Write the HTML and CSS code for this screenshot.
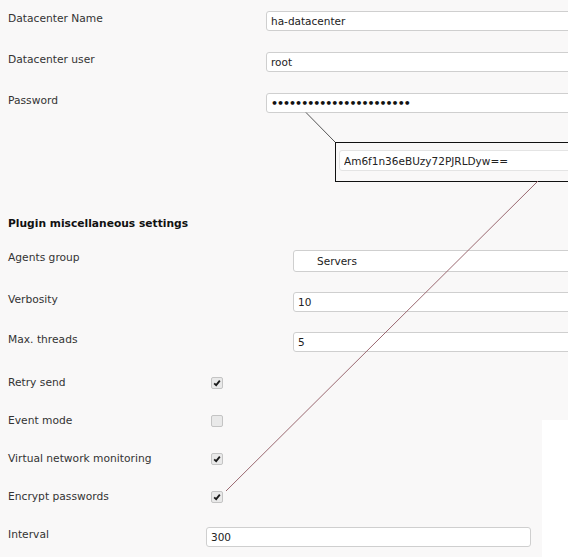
FILE: index.html
```html
<!DOCTYPE html>
<html lang="en">

<head>
  <meta charset="utf-8">
  <title>Plugin settings</title>
  <link rel="stylesheet" href="styles.css">
</head>

<body>
  <div class="page">
    <form class="settings">
      <div class="group">
        <div class="row">
          <label class="label label-wide">Datacenter Name</label>
          <input class="field" type="text" value="ha-datacenter">
        </div>
        <div class="row">
          <label class="label label-wide">Datacenter user</label>
          <input class="field" type="text" value="root">
        </div>
        <div class="row">
          <label class="label label-wide">Password</label>
          <input class="field field-dots" type="text" value="•••••••••••••••••••••••">
        </div>
      </div>

      <div class="callout">
        <input class="field field-plain" type="text" value="Am6f1n36eBUzy72PJRLDyw==">
      </div>

      <h2 class="heading">Plugin miscellaneous settings</h2>

      <div class="row row-first">
        <label class="label label-mid">Agents group</label>
        <select class="field select">
          <option>Servers</option>
        </select>
      </div>
      <div class="row row-input">
        <label class="label label-mid">Verbosity</label>
        <input class="field" type="text" value="10">
      </div>
      <div class="row row-input">
        <label class="label label-mid">Max. threads</label>
        <input class="field" type="text" value="5">
      </div>

      <div class="row row-check">
        <label class="label label-check">Retry send</label>
        <span class="check checked"><svg viewBox="0 0 12 12"><path d="M2.6 6.4 L5 8.6 L9.4 3.2"/></svg></span>
      </div>
      <div class="row row-check">
        <label class="label label-check">Event mode</label>
        <span class="check"></span>
      </div>
      <div class="row row-check">
        <label class="label label-check">Virtual network monitoring</label>
        <span class="check checked"><svg viewBox="0 0 12 12"><path d="M2.6 6.4 L5 8.6 L9.4 3.2"/></svg></span>
      </div>
      <div class="row row-check">
        <label class="label label-check">Encrypt passwords</label>
        <span class="check checked"><svg viewBox="0 0 12 12"><path d="M2.6 6.4 L5 8.6 L9.4 3.2"/></svg></span>
      </div>

      <div class="row row-check">
        <label class="label label-narrow">Interval</label>
        <input class="field" type="text" value="300">
      </div>
    </form>

    <!-- pointer lines drawn over the form -->
    <svg class="pointers" width="568" height="557">
      <line x1="306" y1="112.5" x2="335" y2="142" class="pointer-grey"/>
      <line x1="538" y1="181" x2="226" y2="491" class="pointer-red"/>
    </svg>
  </div>
</body>

</html>
```

FILE: styles.css
```css
html,
body {
  margin: 0;
  padding: 0;
  overflow: hidden;
}

body {
  background-color: #f9f8f8;
  color: #333;
  font-family: 'DejaVu Sans', Verdana, sans-serif;
  font-size: 10.7px;
}

.page {
  position: relative;
  height: 557px;
  background: linear-gradient(#fff, #fff) no-repeat right bottom / 26px 137px;
}

.settings {
  padding: 11px 0 0 8px;
}

.group {
  display: flex;
  flex-direction: column;
  gap: 21px;
}

.row {
  display: flex;
  align-items: flex-start;
}

.row-first {
  margin-top: 19px;
}

.row-input {
  margin-top: 20px;
}

.row-check {
  margin-top: 23px;
}

.label {
  flex: none;
  box-sizing: border-box;
  padding-top: 1px;
  line-height: 14px;
}

.label-wide {
  width: 258px;
}

.label-mid {
  width: 285px;
}

.label-check {
  width: 203px;
}

.label-narrow {
  width: 198px;
}

.field {
  flex: none;
  box-sizing: border-box;
  width: 325px;
  height: 20px;
  margin: 0;
  padding: 0 4px;
  background-color: #fff;
  border: 1px solid #cfcfcf;
  border-radius: 3px;
  color: #222;
  font-family: 'DejaVu Sans', Verdana, sans-serif;
  font-size: 10.5px;
  outline: none;
}

.field-dots {
  font-size: 11px;
  font-weight: bold;
  letter-spacing: -1px;
  color: #111;
}

.select {
  height: 22px;
  padding-left: 23px;
  appearance: none;
}

.callout {
  box-sizing: border-box;
  width: 300px;
  height: 40px;
  margin: 29px 0 0 327px;
  padding: 7px 0 0 3px;
  border: 1px solid #111;
  background-color: #f9f8f8;
}

.field-plain {
  border-color: #e4e4e4;
  height: 21px;
}

.heading {
  margin: 34px 0 0;
  padding-top: 1px;
  font-size: 10.7px;
  font-weight: bold;
  line-height: 14px;
  color: #111;
}

.check {
  flex: none;
  box-sizing: border-box;
  width: 12px;
  height: 12px;
  margin-top: 2px;
  background-color: #e9e9e9;
  border: 1px solid #c4c4c4;
  border-radius: 2px;
}

.check svg {
  display: block;
  width: 10px;
  height: 10px;
  fill: none;
  stroke: #1a1a1a;
  stroke-width: 2.2;
}

.pointers {
  position: absolute;
  top: 0;
  left: 0;
  pointer-events: none;
}

.pointer-grey {
  stroke: #555;
  stroke-width: 1;
}

.pointer-red {
  stroke: #9a6870;
  stroke-width: 1;
}
```
